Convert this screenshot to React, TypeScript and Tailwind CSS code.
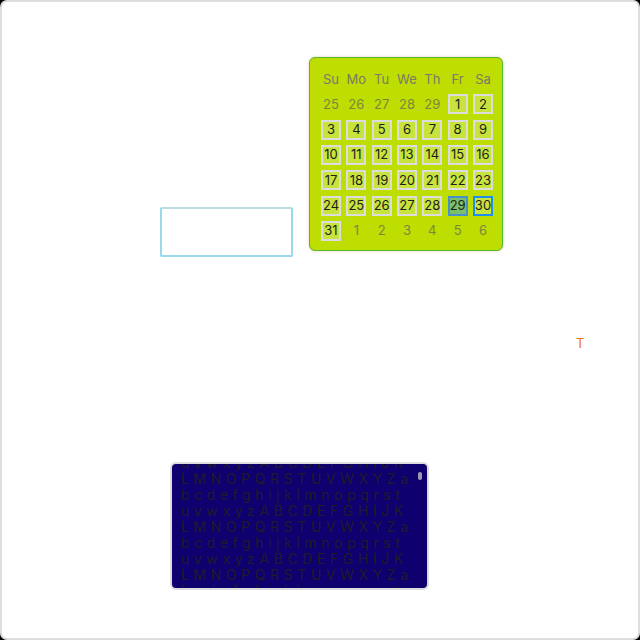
import React from 'react';

const weekDays = ['Su', 'Mo', 'Tu', 'We', 'Th', 'Fr', 'Sa'];

type Day = { label: number; inMonth: boolean };

function buildDays(): Day[] {
  const days: Day[] = [];
  [25, 26, 27, 28, 29].forEach(d => days.push({ label: d, inMonth: false }));
  for (let d = 1; d <= 31; d++) days.push({ label: d, inMonth: true });
  [1, 2, 3, 4, 5, 6].forEach(d => days.push({ label: d, inMonth: false }));
  return days;
}

const lines = [
  'uvwxyzABCDEFGHIJK',
  'LMNOPQRSTUVWXYZa',
  'bcdefghijklmnopqrst',
  'uvwxyzABCDEFGHIJK',
  'LMNOPQRSTUVWXYZa',
  'bcdefghijklmnopqrst',
  'uvwxyzABCDEFGHIJK',
  'LMNOPQRSTUVWXYZa',
  'bcdefghijklmnopqrst',
];

function Calendar() {
  const days = buildDays();
  return (
    <div className="ml-[16px] w-[194px] h-[194px] p-[11px] bg-[#bedd00] border border-[#4cbf2a] rounded-[6px] shadow-[0_0_3px_rgba(230,130,70,0.45)]">
      <div className="grid grid-cols-[repeat(7,20px)] auto-rows-[20px] gap-[5.33px]">
        {weekDays.map(w => (
          <div key={w} className="flex items-center justify-center text-[13px] text-[#7a7a6a] leading-none">
            {w}
          </div>
        ))}
        {days.map((d, i) => {
          if (!d.inMonth) {
            return (
              <div key={i} className="flex items-center justify-center text-[13px] text-[#7d8540] leading-none">
                {d.label}
              </div>
            );
          }
          const selected = d.label === 29;
          const focused = d.label === 30;
          return (
            <div
              key={i}
              className={
                selected
                  ? 'flex items-center justify-center text-[13px] text-[#1e1e1e] leading-none border-2 border-[#4a90c8] bg-[#7cbf6a]'
                  : focused
                  ? 'flex items-center justify-center text-[13px] text-[#1e1e1e] leading-none border-2 border-[#1e8ff0] bg-[#c8e33c]'
                  : 'flex items-center justify-center text-[13px] text-[#1e1e1e] leading-none border-2 border-[#dcdcdc] bg-[#c8e33c]'
              }
            >
              {d.label}
            </div>
          );
        })}
      </div>
    </div>
  );
}

export default function App() {
  return (
    <div className="w-[640px] h-[640px] bg-black" style={{ fontFamily: 'Inter, "Noto Sans", sans-serif' }}>
      <div className="w-full h-full bg-white border-2 border-[#dddddd] rounded-[7px] overflow-hidden">
        {/* Row: text input + calendar */}
        <div className="flex items-start pl-[158px] pt-[55px]">
          <input
            type="text"
            className="mt-[150px] w-[133px] h-[50px] border-2 border-[#9ad8ea] border-t-[#bcdbe6] rounded-[2px] outline-none"
          />
          <Calendar />
        </div>

        {/* Orange label */}
        <div className="mt-[78px] pl-[574px] h-[16px] text-[13px] leading-[16px] text-[#f07010]">T</div>

        {/* Scrolling dark text box */}
        <div className="mt-[111px] ml-[168px] relative w-[259px] h-[128px] bg-[#0f0070] border-2 border-[#dddddd] rounded-[6px] overflow-hidden">
          <div className="-mt-[9px] pl-[9px] text-[14px] leading-[16px] tracking-[4.6px] text-[#1d1d2a] whitespace-nowrap">
            {lines.map((l, i) => (
              <div key={i}>{l}</div>
            ))}
          </div>
          <div className="absolute right-[5px] top-[8px] w-[4px] h-[8px] rounded-full bg-[#9a9ab0]" />
        </div>
      </div>
    </div>
  );
}
